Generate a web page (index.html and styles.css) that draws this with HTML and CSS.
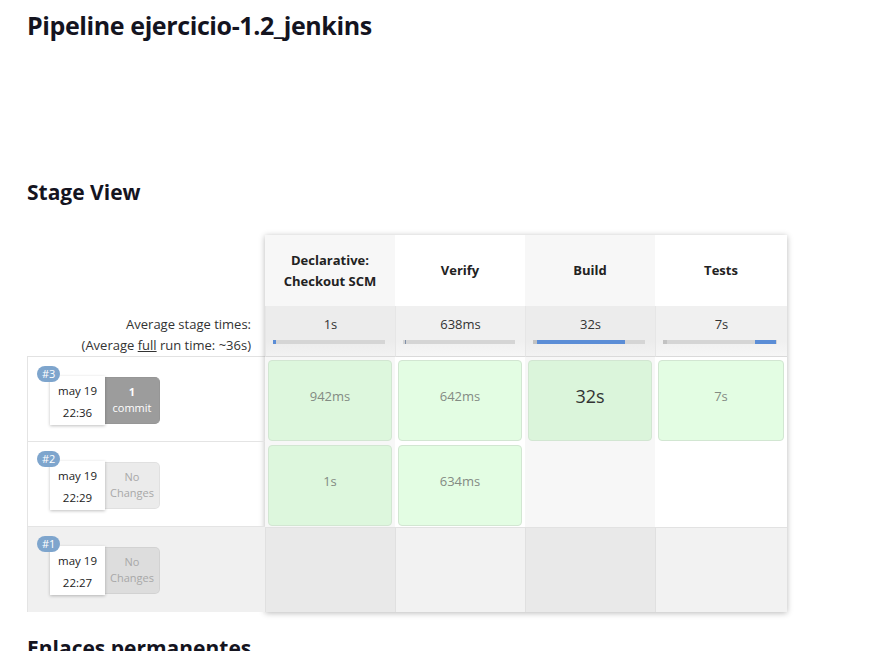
FILE: index.html
```html
<!DOCTYPE html>
<html lang="es">
<head>
<meta charset="utf-8">
<title>Pipeline ejercicio-1.2_jenkins</title>
<link rel="stylesheet" href="styles.css">
</head>
<body>
<main class="page">
  <h1 class="title">Pipeline ejercicio-1.2_jenkins</h1>
  <h2 class="section-title sv-title">Stage View</h2>

  <div class="stage-view">
    <div class="runs">
      <div class="runs-head"></div>
      <div class="runs-avg">
        <div>Average stage times:</div>
        <div>(Average <u>full</u> run time: ~36s)</div>
      </div>
      <div class="run">
        <span class="run-badge">#3</span>
        <div class="run-date"><div>may 19</div><div>22:36</div></div>
        <div class="run-changes has-commit"><div class="num">1</div><div>commit</div></div>
      </div>
      <div class="run">
        <span class="run-badge">#2</span>
        <div class="run-date"><div>may 19</div><div>22:29</div></div>
        <div class="run-changes"><div>No</div><div>Changes</div></div>
      </div>
      <div class="run run-gray">
        <span class="run-badge">#1</span>
        <div class="run-date"><div>may 19</div><div>22:27</div></div>
        <div class="run-changes"><div>No</div><div>Changes</div></div>
      </div>
    </div>

    <div class="stages">
      <div class="hd odd">Declarative:<br>Checkout SCM</div>
      <div class="hd even">Verify</div>
      <div class="hd odd">Build</div>
      <div class="hd even">Tests</div>

      <div class="avg odd"><div>1s</div><div class="bar"><span class="fill" style="left:0;width:3px"></span></div></div>
      <div class="avg even"><div>638ms</div><div class="bar"><span class="fill dim" style="left:2px;width:1px"></span></div></div>
      <div class="avg odd"><div>32s</div><div class="bar"><span class="pre" style="width:4px"></span><span class="fill" style="left:4px;width:88px"></span></div></div>
      <div class="avg even"><div>7s</div><div class="bar"><span class="pre" style="width:4px"></span><span class="fill" style="left:92px;width:21px"></span></div></div>

      <div class="cell odd"><div class="ok">942ms</div></div>
      <div class="cell even"><div class="ok">642ms</div></div>
      <div class="cell odd"><div class="ok big">32s</div></div>
      <div class="cell even"><div class="ok">7s</div></div>

      <div class="cell odd"><div class="ok">1s</div></div>
      <div class="cell even"><div class="ok">634ms</div></div>
      <div class="cell odd"></div>
      <div class="cell even"></div>

      <div class="cell gray odd"></div>
      <div class="cell gray even"></div>
      <div class="cell gray odd"></div>
      <div class="cell gray even"></div>
    </div>
  </div>

  <h2 class="section-title links-title">Enlaces permanentes</h2>
</main>
</body>
</html>
```

FILE: styles.css
```css
html, body {
  margin: 0;
  padding: 0;
  background: #fff;
}
body {
  font-family: "Open Sans", "Noto Sans", "Liberation Sans", sans-serif;
  font-size: 13px;
  color: #333;
  overflow: hidden;
  height: 651px;
}
.page {
  padding-left: 27px;
}
.title {
  margin: 7px 0 0;
  font-size: 25px;
  letter-spacing: -0.4px;
  line-height: 36px;
  font-weight: 700;
  color: #14141f;
}
.section-title {
  font-size: 21px;
  line-height: 28px;
  font-weight: 700;
  color: #14141f;
  margin: 0;
}
.sv-title {
  margin-top: 135px;
}
.links-title {
  margin-top: 22px;
}

.stage-view {
  display: flex;
  margin-top: 29px;
  width: 760px;
}
.runs {
  width: 238px;
  flex: none;
}
.runs-head {
  height: 71px;
}
.runs-avg {
  height: 51px;
  box-sizing: border-box;
  padding: 8px 14px 0 0;
  text-align: right;
  line-height: 21px;
  color: #333;
  border-bottom: 1px solid #e2e2e2;
}
.run {
  position: relative;
  height: 85px;
  box-sizing: border-box;
  border-left: 1px solid #e4e4e4;
  border-bottom: 1px solid #e4e4e4;
  display: flex;
  align-items: flex-start;
  padding: 19px 0 0 22px;
}
.run-gray {
  background: #f0f0f0;
  border-bottom: none;
}
.run-badge {
  position: absolute;
  left: 9px;
  top: 9px;
  z-index: 2;
  background: #7ea5cd;
  color: #fff;
  font-size: 11px;
  line-height: 16px;
  height: 16px;
  padding: 0 5px;
  border-radius: 8px;
}
.run-date {
  width: 55px;
  height: 49px;
  box-sizing: border-box;
  padding-top: 4px;
  background: #fff;
  box-shadow: 0 1px 3px rgba(0, 0, 0, 0.25);
  text-align: center;
  font-size: 11.5px;
  line-height: 22px;
  color: #222;
  position: relative;
  z-index: 1;
}
.run-changes {
  width: 55px;
  height: 47px;
  margin-top: 1px;
  box-sizing: border-box;
  padding-top: 6px;
  text-align: center;
  font-size: 11px;
  line-height: 16px;
  color: #a8a8a8;
  background: rgba(0, 0, 0, 0.08);
  border: 1px solid rgba(0, 0, 0, 0.05);
  border-left: none;
  border-radius: 0 5px 5px 0;
}
.run-changes.has-commit {
  background: #9c9c9c;
  border-color: #969696;
  color: #fff;
}
.run-changes .num {
  font-weight: 700;
}

.stages {
  display: grid;
  grid-template-columns: 130px 130px 130px 132px;
  grid-template-rows: 71px 51px 85px 85px 85px;
  box-shadow: 0 1px 6px rgba(0, 0, 0, 0.28);
  flex: none;
}
.odd { background: #f7f7f7; }
.even { background: #fff; }
.hd {
  display: flex;
  align-items: center;
  justify-content: center;
  text-align: center;
  font-weight: 700;
  font-size: 13px;
  line-height: 21px;
  color: #222;
}
.avg {
  box-sizing: border-box;
  padding-top: 8px;
  text-align: center;
  line-height: 21px;
  color: #333;
  border-bottom: 1px solid #dadada;
  border-left: 1px solid #e6e6e6;
  background: linear-gradient(#ececec, #ececec 70%, #f2f2f2);
}
.avg:first-of-type { border-left: none; }
.avg.even { background: linear-gradient(#f0f0f0, #f0f0f0 70%, #f6f6f6); }
.bar {
  position: relative;
  height: 4px;
  margin: 5px 10px 0 7px;
  background: #d5d5d5;
}
.bar .fill {
  position: absolute;
  top: 0;
  height: 4px;
  background: #5b8dd6;
}
.bar .fill.dim {
  background: #7f8fa8;
}
.bar .pre {
  position: absolute;
  left: 0;
  top: 0;
  height: 4px;
  background: #c2c2c2;
}
.cell {
  box-sizing: border-box;
  padding: 3px 3px 1px;
}
.cell.gray {
  border-top: 1px solid #e2e2e2;
  border-left: 1px solid #e0e0e0;
}
.cell.gray.odd { background: #e9e9e9; }
.cell.gray.even { background: #f2f2f2; }
.ok {
  height: 100%;
  box-sizing: border-box;
  border: 1px solid #d2e6d2;
  border-radius: 4px;
  background: #e3fde3;
  text-align: center;
  padding-top: 25px;
  line-height: 20px;
  font-size: 13px;
  color: #838b83;
}
.odd .ok { background: #ddf7dd; }
.ok.big {
  font-size: 18px;
  color: #333;
  background: #dbf5db;
}
```
